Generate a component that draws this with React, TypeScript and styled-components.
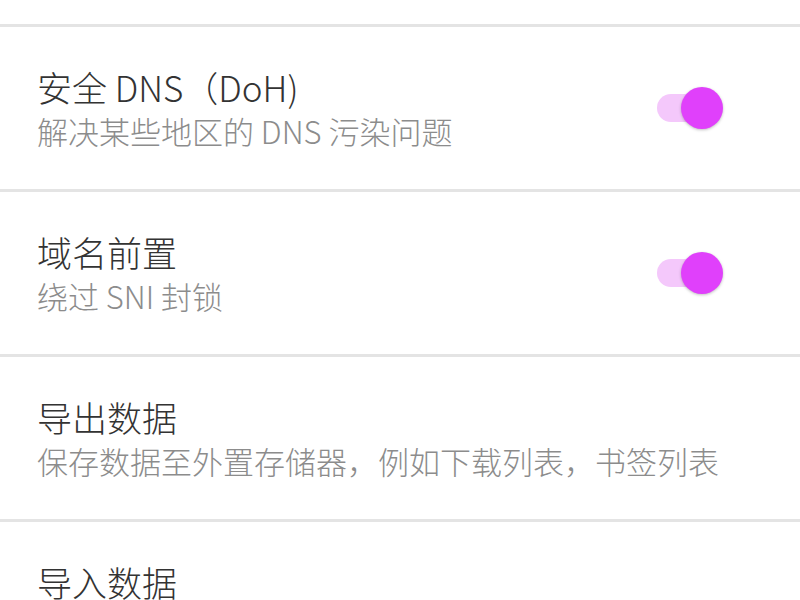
import React from 'react';
import styled, { createGlobalStyle } from 'styled-components';

const GlobalStyle = createGlobalStyle`
    html, body {
        margin: 0;
        padding: 0;
        background: #ffffff;
    }
    body {
        font-family: 'Noto Sans CJK SC', 'Noto Sans', sans-serif;
    }
`;

type Item = {
    title: string;
    desc: string;
    toggle?: boolean;
};

const items: Item[] = [
    { title: '安全 DNS（DoH)', desc: '解决某些地区的 DNS 污染问题', toggle: true },
    { title: '域名前置', desc: '绕过 SNI 封锁', toggle: true },
    { title: '导出数据', desc: '保存数据至外置存储器，例如下载列表，书签列表' },
    { title: '导入数据', desc: '从外置存储器恢复数据' },
];

const App: React.FC = () => {
    return (
        <>
            <GlobalStyle />
            <Container>
                <TopCap />
                {items.map((item) => (
                    <Row key={item.title}>
                        <TextBox>
                            <Title>{item.title}</Title>
                            <Desc>{item.desc}</Desc>
                        </TextBox>
                        {item.toggle && (
                            <Switch>
                                <Track />
                                <Thumb />
                            </Switch>
                        )}
                    </Row>
                ))}
            </Container>
        </>
    );
};

export default App;

const Container = styled.div`
    width: 800px;
    height: 600px;
    overflow: hidden;
    display: flex;
    flex-direction: column;
    background: #ffffff;
`;

const TopCap = styled.div`
    flex: 0 0 24px;
    border-bottom: 3px solid #e4e4e4;
`;

const Row = styled.div`
    flex: 0 0 162px;
    display: flex;
    flex-direction: row;
    align-items: center;
    justify-content: space-between;
    padding: 0 77px 0 37px;
    border-bottom: 3px solid #e4e4e4;
`;

const TextBox = styled.div`
    display: flex;
    flex-direction: column;
    margin-top: 1px;
`;

const Title = styled.div`
    font-size: 35px;
    font-weight: 300;
    line-height: 45px;
    color: #333333;
`;

const Desc = styled.div`
    font-size: 31px;
    font-weight: 300;
    line-height: 44px;
    color: #8c8c8c;
`;

const Switch = styled.div`
    position: relative;
    width: 66px;
    height: 42px;
    display: flex;
    align-items: center;
`;

const Track = styled.div`
    width: 62px;
    height: 28px;
    border-radius: 14px;
    background: #f4c8fb;
`;

const Thumb = styled.div`
    position: absolute;
    right: 0;
    top: 0;
    width: 42px;
    height: 42px;
    border-radius: 50%;
    background: #e040fb;
    box-shadow: 0 1px 3px rgba(0, 0, 0, 0.25);
`;
